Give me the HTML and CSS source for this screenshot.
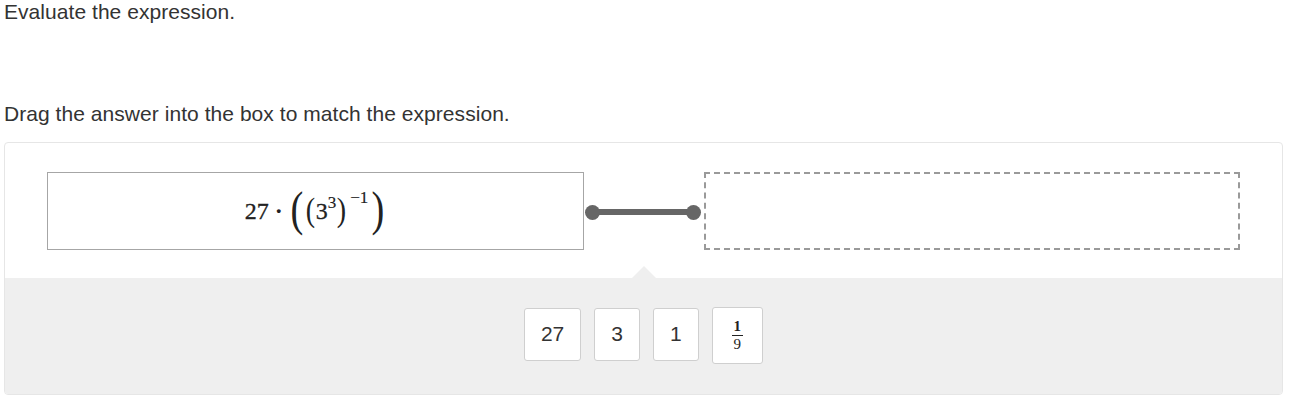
FILE: index.html
```html
<!DOCTYPE html>
<html>
<head>
<meta charset="utf-8">
<link rel="stylesheet" href="styles.css">
</head>
<body>
<p class="prompt">Evaluate the expression.</p>
<p class="prompt second">Drag the answer into the box to match the expression.</p>
<div class="widget">
  <div class="match-row">
    <div class="expr-box">
      <span class="math">
        <span class="mn">27</span><span class="cdot">·</span><span class="bigp">(</span><span class="midp">(</span><span class="mn">3</span><span class="sup">3</span><span class="midp">)</span><span class="sup neg">−1</span><span class="bigp">)</span>
      </span>
    </div>
    <div class="connector">
      <span class="dot"></span>
      <span class="line"></span>
      <span class="dot"></span>
    </div>
    <div class="drop-box"></div>
  </div>
  <div class="bank">
    <span class="notch"></span>
    <div class="tile">27</div>
    <div class="tile">3</div>
    <div class="tile">1</div>
    <div class="tile frac-tile">
      <span class="frac"><span class="fn">1</span><span class="fd">9</span></span>
    </div>
  </div>
</div>
</body>
</html>
```

FILE: styles.css
```css
html, body {
  margin: 0;
  padding: 0;
  background: #fff;
}
body {
  padding: 0 4px;
  font-family: "Liberation Sans", Arial, sans-serif;
  color: #333;
}
.prompt {
  margin: 0;
  font-size: 21px;
  line-height: 24px;
  letter-spacing: 0.05px;
}
.prompt.second {
  margin-top: 78px;
}
.widget {
  margin-top: 16px;
  width: 1277px;
  border: 1px solid #e6e6e6;
  border-radius: 4px;
  overflow: hidden;
}
.match-row {
  display: flex;
  align-items: center;
  padding: 29px 42px 28px 42px;
}
.expr-box {
  box-sizing: border-box;
  width: 537px;
  height: 78px;
  border: 1px solid #a6a6a6;
  display: flex;
  align-items: center;
  justify-content: center;
}
.math {
  font-family: "Liberation Serif", "DejaVu Serif", serif;
  font-size: 24px;
  color: #222;
  display: flex;
  align-items: center;
  white-space: nowrap;
  -webkit-text-stroke: 0.3px #222;
}
.mn { line-height: 1; }
.cdot { margin: 0 6px; font-weight: bold; -webkit-text-stroke: 0; }
.bigp {
  font-size: 48px;
  line-height: 1;
  transform: scaleX(0.8);
  position: relative;
  top: -2px;
  -webkit-text-stroke: 0;
}
.midp {
  font-size: 33px;
  line-height: 1;
  transform: scaleX(0.85);
  position: relative;
  top: -1px;
  -webkit-text-stroke: 0;
}
.sup {
  font-size: 17px;
  align-self: flex-start;
  position: relative;
  top: 6px;
  -webkit-text-stroke: 0.2px #222;
}
.neg { top: 1px; margin: 0 2px 0 3px; }
.connector {
  width: 120px;
  display: flex;
  align-items: center;
  position: relative;
  top: 1px;
}
.dot {
  width: 15px;
  height: 15px;
  border-radius: 50%;
  background: #666;
  flex: none;
}
.line {
  flex: 1;
  height: 6px;
  background: #666;
  margin: 0 -2px;
}
.connector .dot:first-child { margin-left: 1px; }
.connector .dot:last-child { margin-right: 3px; }
.drop-box {
  box-sizing: border-box;
  width: 536px;
  height: 78px;
  border: 2px dashed #9a9a9a;
}
.bank {
  position: relative;
  background: #efefef;
  height: 116px;
  display: flex;
  align-items: center;
  justify-content: center;
  gap: 13px;
}
.notch {
  position: absolute;
  top: -12px;
  left: 627px;
  width: 0;
  height: 0;
  border-left: 12px solid transparent;
  border-right: 12px solid transparent;
  border-bottom: 12px solid #efefef;
}
.tile {
  box-sizing: border-box;
  height: 53px;
  padding: 0 16px;
  background: #fff;
  border: 1px solid #cfcfcf;
  border-radius: 3px;
  display: flex;
  align-items: center;
  justify-content: center;
  font-size: 21px;
  color: #333;
  position: relative;
  top: -2px;
}
.frac-tile {
  height: 57px;
  padding: 0 19px;
  top: -1px;
}
.frac {
  font-family: "Liberation Serif", "DejaVu Serif", serif;
  display: flex;
  flex-direction: column;
  align-items: center;
  font-size: 15px;
  line-height: 15px;
  color: #222;
}
.fn {
  padding: 0 2px 1px;
  border-bottom: 1px solid #222;
  font-weight: bold;
}
.fd { padding-top: 1px; }
```
